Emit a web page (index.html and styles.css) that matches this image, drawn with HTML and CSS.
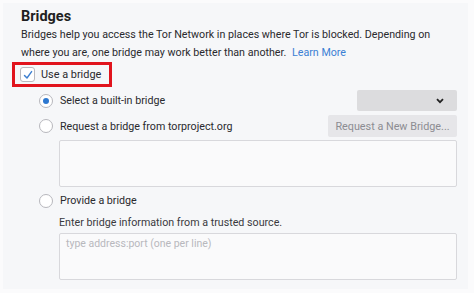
FILE: index.html
```html
<!DOCTYPE html>
<html>
<head>
<meta charset="utf-8">
<link rel="stylesheet" href="styles.css">
</head>
<body>
<div class="panel">
  <h1 class="title">Bridges</h1>
  <p class="desc">Bridges help you access the Tor Network in places where Tor is blocked. Depending on<br>where you are, one bridge may work better than another. <a class="link">Learn More</a></p>
  <div class="use-row">
    <label class="use-box">
      <span class="checkbox">
        <svg width="10" height="10" viewBox="0 0 10 10"><path d="M1.5 5.4 L4 8 L8.6 1.6" fill="none" stroke="#3d7fd0" stroke-width="1.4" stroke-linecap="round" stroke-linejoin="round"/></svg>
      </span>
      <span>Use a bridge</span>
    </label>
  </div>
  <div class="options">
    <div class="opt-row first">
      <span class="radio checked"></span>
      <span class="opt-label">Select a built-in bridge</span>
      <span class="select">
        <svg width="8" height="6" viewBox="0 0 8 6"><path d="M1 1.2 L4 4.2 L7 1.2" fill="none" stroke="#222" stroke-width="1.8"/></svg>
      </span>
    </div>
    <div class="opt-row second">
      <span class="radio"></span>
      <span class="opt-label">Request a bridge from torproject.org</span>
      <span class="btn">Request a New Bridge...</span>
    </div>
    <div class="area area1"></div>
    <div class="opt-row third">
      <span class="radio"></span>
      <span class="opt-label">Provide a bridge</span>
    </div>
    <div class="hint">Enter bridge information from a trusted source.</div>
    <div class="area area2"><span class="placeholder">type address:port (one per line)</span></div>
  </div>
</div>
</body>
</html>
```
FILE: styles.css
```css
html, body {
  margin: 0;
  padding: 0;
  background: #fbfbfc;
}
body {
  width: 474px;
  height: 293px;
  overflow: hidden;
  font-family: "Roboto", "Liberation Sans", sans-serif;
  color: #2a2a2e;
}
.panel {
  margin: 3px 6px 0 3px;
  height: 286px;
  background: #f6f7f9;
  padding: 5px 0 0 18px;
  box-sizing: border-box;
}
.title {
  margin: 0;
  font-size: 14.5px;
  font-weight: 700;
  line-height: 18px;
  color: #1f1f22;
}
.desc {
  margin: 0;
  font-size: 10.7px;
  line-height: 18px;
  white-space: nowrap;
}
.link {
  color: #3b80d4;
  margin-left: 3px;
}
.use-row {
  margin-top: 0;
  margin-left: -9px;
  display: flex;
}
.use-box {
  display: flex;
  align-items: center;
  gap: 6px;
  border: 3px solid #e1141d;
  height: 19px;
  padding: 0 8px 0 5px;
  font-size: 10.9px;
}
.checkbox {
  width: 13px;
  height: 13px;
  border: 1px solid #b9b9bf;
  border-radius: 3px;
  background: #fff;
  display: flex;
  align-items: center;
  justify-content: center;
}
.options {
  padding-left: 18px;
  width: 418px;
  font-size: 10.7px;
}
.opt-row {
  display: flex;
  align-items: center;
  height: 21px;
}
.opt-row.first {
  margin-top: 3px;
}
.opt-row.second {
  margin-top: 4px;
  height: 22px;
}
.opt-row.third {
  margin-top: 3px;
}
.radio {
  width: 14px;
  height: 14px;
  border: 1px solid #b7b7bd;
  border-radius: 50%;
  background: #fff;
  box-sizing: border-box;
  margin-right: 7px;
  position: relative;
  flex: none;
}
.radio.checked::after {
  content: "";
  position: absolute;
  left: 3px;
  top: 3px;
  width: 6px;
  height: 6px;
  border-radius: 50%;
  background: #2d78d0;
}
.opt-label {
  flex: 1;
}
.select {
  width: 100px;
  height: 21px;
  background: #dcdcde;
  border-radius: 2px;
  display: flex;
  align-items: center;
  justify-content: flex-end;
  padding-right: 13px;
  box-sizing: border-box;
}
.btn {
  width: 129px;
  height: 22px;
  background: #e6e6e9;
  color: #8c8c92;
  display: flex;
  align-items: center;
  justify-content: center;
  border-radius: 2px;
  font-size: 10.8px;
  white-space: nowrap;
}
.area {
  margin-left: 20px;
  height: 47px;
  background: #fafafb;
  border: 1px solid #d8d8dc;
  border-radius: 2px;
  box-sizing: border-box;
}
.area1 {
  margin-top: 3px;
}
.hint {
  margin: 4px 0 0 20px;
  font-size: 10.7px;
  line-height: 16px;
  color: #3a3a3e;
}
.area2 {
  margin-top: 2px;
  padding: 3px 6px;
}
.placeholder {
  color: #b8b8bd;
  font-size: 10.5px;
}
```
